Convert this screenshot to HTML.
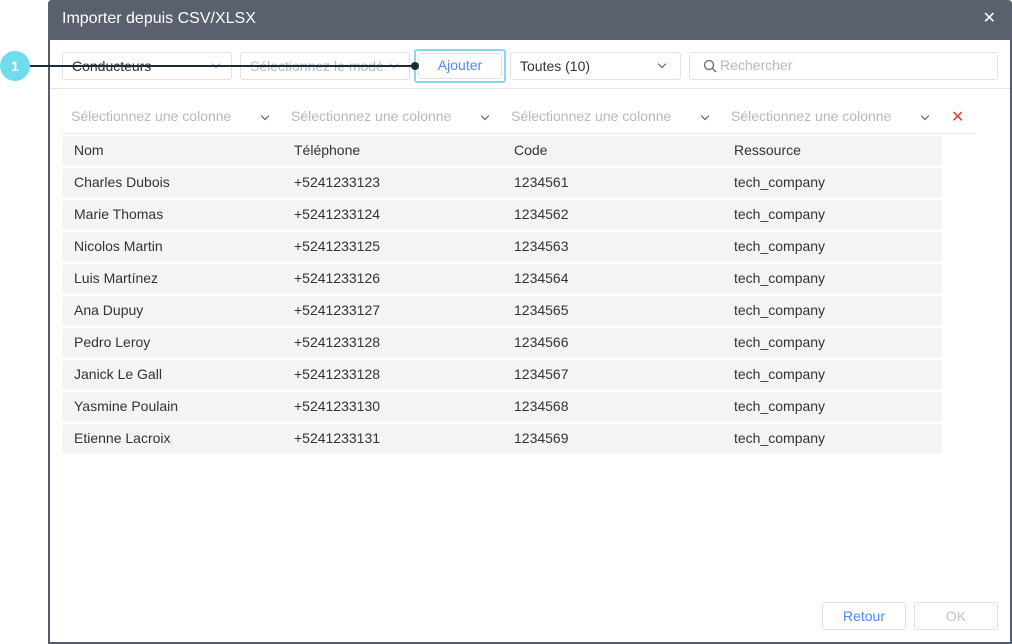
<!DOCTYPE html>
<html><head><meta charset="utf-8"><style>
*{box-sizing:border-box;margin:0;padding:0}
body{width:1012px;height:644px;background:#fff;font-family:"Liberation Sans",sans-serif;position:relative;overflow:hidden;font-size:14px;color:#333}
.dlg{position:absolute;left:48px;top:0;width:964px;height:644px;border:2px solid #545e72;border-top:0;border-radius:4px 4px 0 0;background:#fff}
.hdr{position:absolute;left:48px;top:0;width:964px;height:40px;background:#5a616e;border-radius:4px 4px 0 0;color:#fff;font-size:16px;line-height:38px;padding-left:14px}
.x{position:absolute;right:16px;top:0;font-size:16px}
.box{position:absolute;top:52px;height:28px;border:1px solid #e2e2e2;border-radius:3px;line-height:26px;padding-left:9px;font-size:14px}
.chev{position:absolute;width:6px;height:6px;border-right:1.5px solid #555;border-bottom:1.5px solid #555;transform:rotate(45deg)}
.sep{position:absolute;left:50px;width:960px;top:88px;height:1px;background:#e6e6e6}
.cs{position:absolute;top:108px;color:#b5b8bd;font-size:14px}
.row{position:absolute;left:62px;width:880px;height:30px;background:#f4f4f4;border-radius:3px;line-height:28px;font-size:14px;color:#333}
.row span{position:absolute;top:0}
.btn{position:absolute;top:602px;height:28px;border:1px solid #e2e2e2;border-radius:3px;text-align:center;line-height:26px;font-size:14px}
</style></head><body>
<div class="dlg"></div>
<div class="hdr">Importer depuis CSV/XLSX<span class="x">✕</span></div>
<div class="box" style="left:62px;width:170px;color:#333">Conducteurs<i class="chev" style="left:150px;top:8px;border-color:#aaa"></i></div>
<div class="box" style="left:240px;width:170px;color:#b5b8bd">Sélectionnez le modè<i class="chev" style="left:150px;top:8px;border-color:#aaa"></i></div>
<div style="position:absolute;left:414px;top:49px;width:92px;height:34px;border:2px solid #7fdcef;border-radius:3px"></div>
<div class="box" style="left:418px;top:53px;width:84px;height:26px;color:#4a8bf0;text-align:center;padding:0;line-height:23px">Ajouter</div>
<div class="box" style="left:510px;width:171px">Toutes (10)<i class="chev" style="left:148px;top:8px"></i></div>
<div class="box" style="left:689px;width:309px;color:#b5b8bd;padding-left:30px;line-height:24px">Rechercher
<svg style="position:absolute;left:13px;top:6px" width="14" height="14" viewBox="0 0 14 14"><circle cx="6" cy="6" r="4.5" fill="none" stroke="#666" stroke-width="1.3"/><path d="M9.3 9.3L13 13" stroke="#666" stroke-width="1.3"/></svg></div>
<div style="position:absolute;left:0;top:51px;width:30px;height:30px;border-radius:50%;background:#6fdcee;color:#fff;font-weight:bold;text-align:center;line-height:30px;font-size:14px">1</div>
<div style="position:absolute;left:30px;top:65px;width:385px;height:2px;background:#1d2a3a"></div>
<div style="position:absolute;left:411px;top:62px;width:8px;height:8px;border-radius:50%;background:#1d2a3a"></div>
<div class="sep"></div>
<div class="cs" style="left:71px">Sélectionnez une colonne</div><i class="chev" style="left:262px;top:113px"></i>
<div class="cs" style="left:291px">Sélectionnez une colonne</div><i class="chev" style="left:482px;top:113px"></i>
<div class="cs" style="left:511px">Sélectionnez une colonne</div><i class="chev" style="left:702px;top:113px"></i>
<div class="cs" style="left:731px">Sélectionnez une colonne</div><i class="chev" style="left:922px;top:113px"></i>
<div style="position:absolute;left:951px;top:107px;color:#ee3b3b;font-size:16px">✕</div>
<div style="position:absolute;left:62px;top:133px;width:912px;height:1px;background:#e6e6e6"></div>
<div class="row" style="top:136px"><span style="left:12px">Nom</span><span style="left:232px">Téléphone</span><span style="left:452px">Code</span><span style="left:672px">Ressource</span></div>
<div class="row" style="top:168px"><span style="left:12px">Charles Dubois</span><span style="left:232px">+5241233123</span><span style="left:452px">1234561</span><span style="left:672px">tech_company</span></div>
<div class="row" style="top:200px"><span style="left:12px">Marie Thomas</span><span style="left:232px">+5241233124</span><span style="left:452px">1234562</span><span style="left:672px">tech_company</span></div>
<div class="row" style="top:232px"><span style="left:12px">Nicolos Martin</span><span style="left:232px">+5241233125</span><span style="left:452px">1234563</span><span style="left:672px">tech_company</span></div>
<div class="row" style="top:264px"><span style="left:12px">Luis Martínez</span><span style="left:232px">+5241233126</span><span style="left:452px">1234564</span><span style="left:672px">tech_company</span></div>
<div class="row" style="top:296px"><span style="left:12px">Ana Dupuy</span><span style="left:232px">+5241233127</span><span style="left:452px">1234565</span><span style="left:672px">tech_company</span></div>
<div class="row" style="top:328px"><span style="left:12px">Pedro Leroy</span><span style="left:232px">+5241233128</span><span style="left:452px">1234566</span><span style="left:672px">tech_company</span></div>
<div class="row" style="top:360px"><span style="left:12px">Janick Le Gall</span><span style="left:232px">+5241233128</span><span style="left:452px">1234567</span><span style="left:672px">tech_company</span></div>
<div class="row" style="top:392px"><span style="left:12px">Yasmine Poulain</span><span style="left:232px">+5241233130</span><span style="left:452px">1234568</span><span style="left:672px">tech_company</span></div>
<div class="row" style="top:424px"><span style="left:12px">Etienne Lacroix</span><span style="left:232px">+5241233131</span><span style="left:452px">1234569</span><span style="left:672px">tech_company</span></div>
<div class="btn" style="left:822px;width:84px;color:#4a8bf0">Retour</div>
<div class="btn" style="left:914px;width:84px;color:#c0c3c8">OK</div>
</body></html>
